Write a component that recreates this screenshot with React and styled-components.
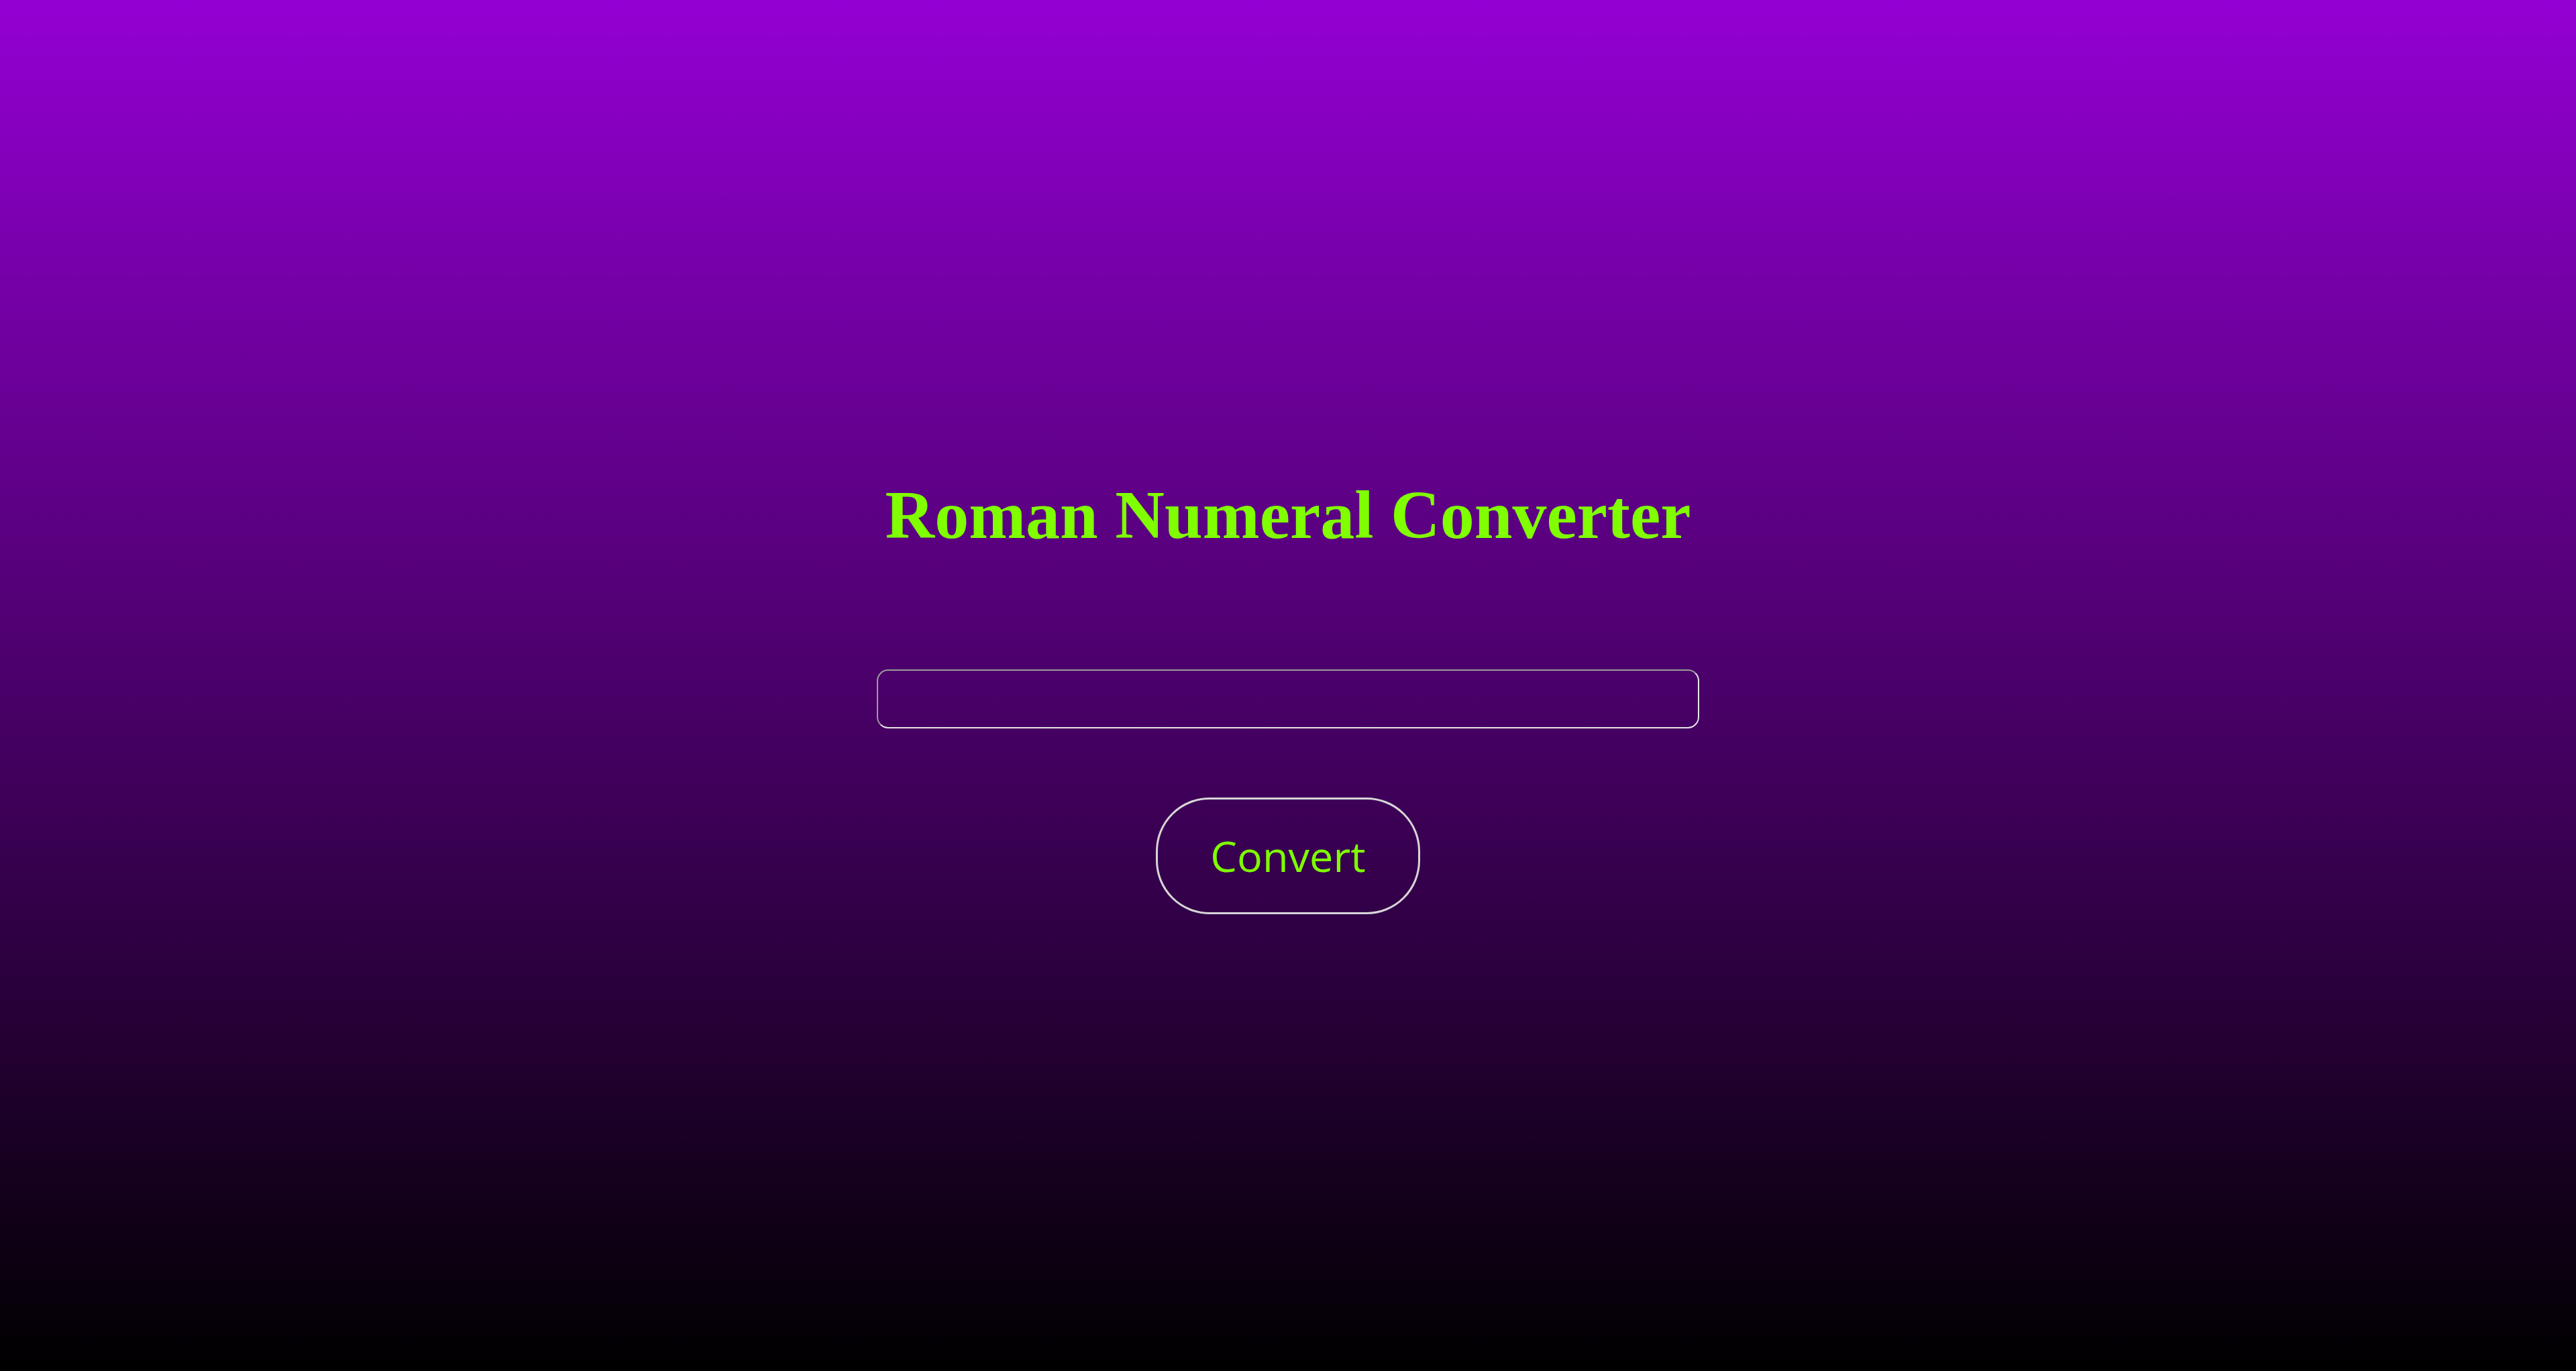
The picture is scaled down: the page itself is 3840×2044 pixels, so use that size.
import styled, { createGlobalStyle } from "styled-components";

export default function App() {
  return (
    <>
      <GlobalStyle />
      <Page>
        <Title>Roman Numeral Converter</Title>
        <NumberInput type="text" aria-label="number" />
        <ConvertButton type="button">Convert</ConvertButton>
      </Page>
    </>
  );
}

// Styling
const GlobalStyle = createGlobalStyle`
  html, body {
    margin: 0;
    padding: 0;
  }
  body {
    min-height: 100vh;
    background: linear-gradient(to bottom, #9400d3, #000000);
    font-family: "Open Sans", "Liberation Sans", sans-serif;
  }
`;

const Page = styled.main`
  display: flex;
  flex-direction: column;
  align-items: center;
  justify-content: center;
  min-height: 100vh;
  box-sizing: border-box;
  padding-top: 28px;
`;

const Title = styled.h1`
  margin: 0;
  font-family: "Liberation Serif", "Times New Roman", serif;
  font-weight: 700;
  font-size: 102px;
  line-height: 1.15;
  color: #7fff00;
`;

const NumberInput = styled.input`
  box-sizing: border-box;
  width: 1226px;
  height: 88px;
  margin-top: 171px;
  padding: 0 20px;
  background: transparent;
  border-style: solid;
  border-width: 2px;
  border-color: #9c9c9c #e6e6e6 #e6e6e6 #9c9c9c;
  border-radius: 17px;
  color: #7fff00;
  font-family: "Open Sans", sans-serif;
  font-size: 48px;
  outline: none;
`;

const ConvertButton = styled.button`
  box-sizing: border-box;
  width: 394px;
  height: 174px;
  margin-top: 103px;
  background: transparent;
  border: 3px solid #d6d6d6;
  border-radius: 80px;
  color: #7fff00;
  font-family: "Open Sans", sans-serif;
  font-weight: 400;
  font-size: 63px;
  cursor: pointer;
`;
